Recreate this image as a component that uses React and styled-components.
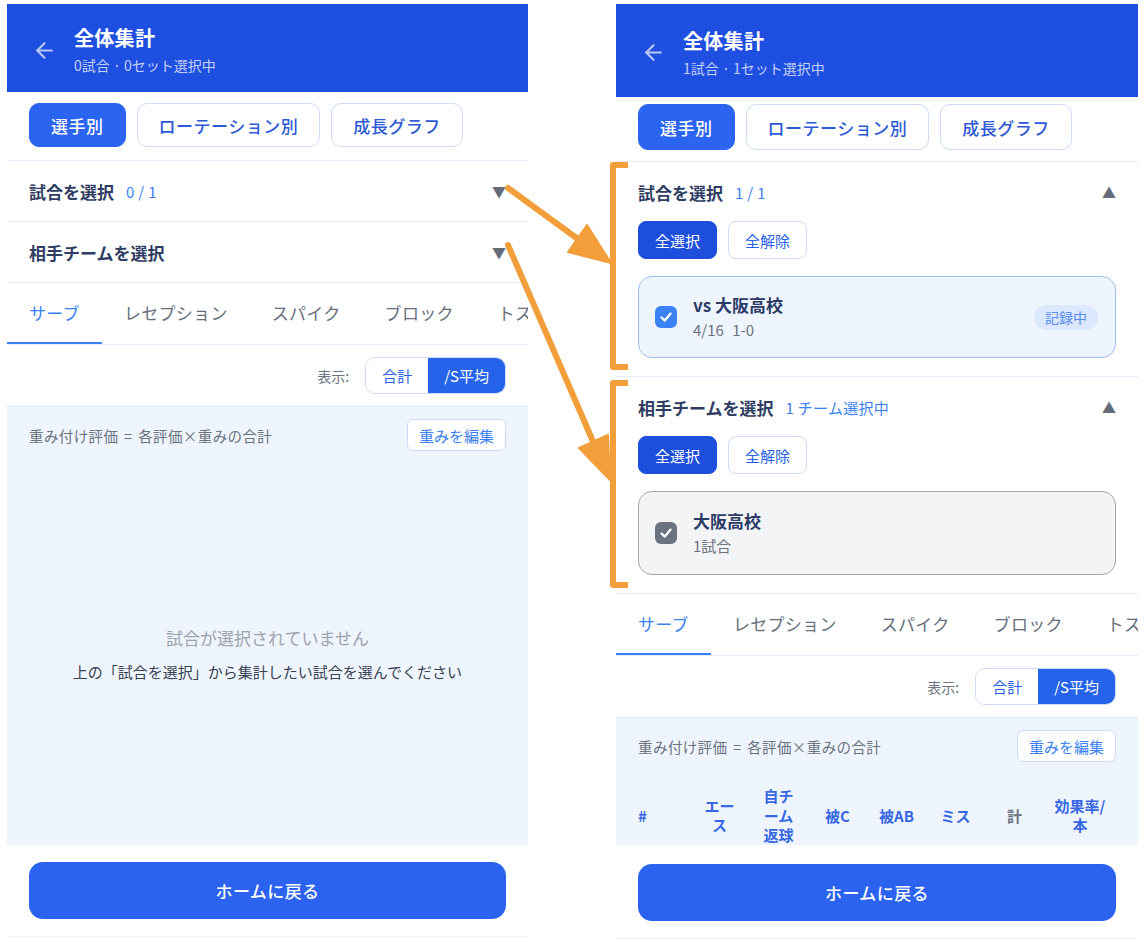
import React from 'react';
import styled, { createGlobalStyle } from 'styled-components';
import { ArrowLeft } from 'lucide-react';

const GlobalStyle = createGlobalStyle`
  html, body {
    margin: 0;
    padding: 0;
    background: #ffffff;
  }
  body {
    font-family: "Noto Sans CJK JP", "Noto Sans", "Liberation Sans", sans-serif;
    color: #2f3d63;
    overflow: hidden;
  }
  * { box-sizing: border-box; }
`;

const Page = styled.div`
  position: relative;
  width: 1148px;
  height: 942px;
  display: flex;
  align-items: flex-start;
  gap: 88px;
  padding: 4px 0 0 7px;
  overflow: hidden;
`;

const Screen = styled.div`
  width: ${(p) => p.$width}px;
  height: ${(p) => (p.$tall ? 935 : 933)}px;
  display: flex;
  flex-direction: column;
  background: #ffffff;
  border-bottom: 1px solid #eef2f9;
`;

const Header = styled.header`
  flex: none;
  height: ${(p) => (p.$tall ? 93 : 88)}px;
  background: #1f4fe0;
  display: flex;
  align-items: center;
  gap: 17px;
  padding: 4px 25px 0;
  color: #ffffff;
`;

const BackIcon = styled(ArrowLeft)`
  color: #b9c9f8;
  flex: none;
`;

const TitleBlock = styled.div`
  display: flex;
  flex-direction: column;
`;

const Title = styled.h1`
  margin: 0;
  font-size: 20px;
  line-height: 26px;
  font-weight: 700;
  letter-spacing: 0.3px;
`;

const Subtitle = styled.div`
  margin-top: 5px;
  font-size: 14px;
  line-height: 19px;
  color: #c3d1fa;
`;

const Body = styled.div`
  flex: 1;
  min-height: 0;
  overflow: hidden;
  display: flex;
  flex-direction: column;
`;

const ModeBar = styled.div`
  flex: none;
  display: flex;
  gap: 11px;
  padding: ${(p) => (p.$tall ? '7px 22px 11px' : '11px 22px 13px')};
  border-bottom: 1px solid #e4ecfa;
`;

const ModeButton = styled.button`
  height: ${(p) => (p.$tall ? 46 : 44)}px;
  padding: 0 21px;
  border-radius: 10px;
  font-family: inherit;
  font-size: 17px;
  font-weight: 500;
  letter-spacing: 0.5px;
  border: 1px solid ${(p) => (p.$active ? '#2b64f1' : '#cddbf6')};
  background: ${(p) => (p.$active ? '#2b64f1' : '#ffffff')};
  color: ${(p) => (p.$active ? '#ffffff' : '#2c5ad6')};
`;

const Section = styled.section`
  flex: none;
  padding: 18px 22px;
  border-bottom: 1px solid #e4ecfa;
`;

const SectionHead = styled.div`
  display: flex;
  align-items: center;
  height: 24px;
`;

const SectionTitle = styled.span`
  font-size: 17px;
  font-weight: 600;
  color: #2f3d63;
`;

const SectionCount = styled.span`
  margin-left: 12px;
  font-size: 15px;
  letter-spacing: 0.3px;
  color: #3b7ff2;
`;

const Caret = styled.span`
  margin-left: auto;
  margin-right: 0;
  font-size: 14px;
  color: #646b78;
`;

const ButtonRow = styled.div`
  display: flex;
  gap: 11px;
  margin-top: 17px;
`;

const SmallButton = styled.button`
  height: 38px;
  padding: 0 16px;
  border-radius: 8px;
  font-family: inherit;
  font-size: 15px;
  border: 1px solid ${(p) => (p.$filled ? '#1d4fdc' : '#cddbf6')};
  background: ${(p) => (p.$filled ? '#1d4fdc' : '#ffffff')};
  color: ${(p) => (p.$filled ? '#ffffff' : '#2a62e6')};
`;

const Card = styled.div`
  margin-top: 17px;
  height: ${(p) => (p.$muted ? 84 : 82)}px;
  display: flex;
  align-items: center;
  gap: 16px;
  padding: 0 16px;
  border-radius: 14px;
  border: 1.5px solid ${(p) => (p.$muted ? '#a3a8b2' : '#9fbdf5')};
  background: ${(p) => (p.$muted ? '#f3f4f6' : '#eff5fe')};
`;

const CheckBox = styled.span`
  flex: none;
  width: 22px;
  height: 22px;
  border-radius: 6px;
  background: ${(p) => (p.$muted ? '#6b7280' : '#3b82f6')};
  display: flex;
  align-items: center;
  justify-content: center;
`;

const CardText = styled.div`
  display: flex;
  flex-direction: column;
  gap: 3px;
`;

const CardName = styled.div`
  font-size: 17px;
  font-weight: 600;
  line-height: 22px;
  color: #2b3a66;
`;

const CardSub = styled.div`
  font-size: 15px;
  line-height: 21px;
  color: #6b7280;
  word-spacing: 5px;
`;

const Badge = styled.span`
  margin-left: auto;
  margin-right: 1px;
  height: 25px;
  padding: 0 11px;
  border-radius: 13px;
  background: #dce8fd;
  color: #5a8df0;
  font-size: 14px;
  display: flex;
  align-items: center;
`;

const StatTabs = styled.div`
  flex: none;
  display: flex;
  height: 62px;
  border-bottom: 1px solid #e4ecfa;
  overflow: hidden;
  white-space: nowrap;
`;

const StatTab = styled.div`
  flex: none;
  padding: 0 22px;
  display: flex;
  align-items: center;
  font-size: 17px;
  letter-spacing: 0.3px;
  color: ${(p) => (p.$active ? '#3b82f6' : '#676f7c')};
  border-bottom: 3px solid ${(p) => (p.$active ? '#3b82f6' : 'transparent')};
  margin-bottom: -1px;
  padding-top: 0;
`;

const ViewRow = styled.div`
  flex: none;
  height: 61px;
  display: flex;
  align-items: center;
  justify-content: flex-end;
  gap: 16px;
  padding: 0 22px;
`;

const ViewLabel = styled.span`
  font-size: 14px;
  color: #6b7280;
`;

const Toggle = styled.div`
  display: flex;
  height: 37px;
  border: 1px solid #cddbf6;
  border-radius: 10px;
  overflow: hidden;
`;

const ToggleItem = styled.span`
  display: flex;
  align-items: center;
  padding: 0 16px;
  font-size: 15px;
  background: ${(p) => (p.$active ? '#2563eb' : '#ffffff')};
  color: ${(p) => (p.$active ? '#ffffff' : '#2a62e6')};
`;

const Panel = styled.div`
  flex: ${(p) => (p.$fill ? 1 : 'none')};
  display: flex;
  flex-direction: column;
  background: #eff5fe;
  border-top: 1px solid #dfe8f8;
`;

const PanelHead = styled.div`
  display: flex;
  align-items: center;
  justify-content: space-between;
  padding: 12px 22px 13px;
`;

const Formula = styled.span`
  font-size: 14.5px;
  letter-spacing: 0.4px;
  word-spacing: 2px;
  color: #6b7280;
`;

const EditButton = styled.button`
  height: 32px;
  padding: 0 11px;
  border-radius: 6px;
  border: 1px solid #cddbf6;
  background: #ffffff;
  color: #3b7ff2;
  font-family: inherit;
  font-size: 15px;
`;

const Empty = styled.div`
  flex: 1;
  display: flex;
  flex-direction: column;
  align-items: center;
  justify-content: center;
  gap: 12px;
  padding-bottom: 2px;
`;

const EmptyTitle = styled.div`
  font-size: 17px;
  line-height: 23px;
  color: #9ca3af;
`;

const EmptyHint = styled.div`
  font-size: 15px;
  line-height: 21px;
  color: #374151;
`;

const TableHead = styled.div`
  display: grid;
  grid-template-columns: 52px repeat(6, 59px) 1fr;
  align-items: center;
  padding: 11px 22px 0;
`;

const HeadCell = styled.div`
  padding: 0 ${(p) => (p.$wide ? 8 : 10)}px;
  font-size: 15px;
  line-height: 19.5px;
  font-weight: 600;
  text-align: ${(p) => (p.$left ? 'left' : 'center')};
  color: ${(p) => (p.$gray ? '#6b7280' : '#3767e3')};
  ${(p) => (p.$left ? 'padding-left: 0;' : '')}
`;

const Footer = styled.footer`
  flex: none;
  padding: 17px 22px;
`;

const HomeButton = styled.button`
  width: 100%;
  height: 57px;
  border: none;
  border-radius: 14px;
  background: #2b63f0;
  color: #ffffff;
  font-family: inherit;
  font-size: 17px;
  font-weight: 500;
  letter-spacing: 0.4px;
`;

const Overlay = styled.svg`
  position: absolute;
  left: 0;
  top: 0;
  pointer-events: none;
`;

const Check = () => (
  <svg width="16" height="16" viewBox="0 0 16 16">
    <polyline points="3.5,8.5 6.8,11.6 12.6,4.6" fill="none" stroke="#ffffff" strokeWidth="2.3" strokeLinecap="round" strokeLinejoin="round" />
  </svg>
);

const statTabs = ['サーブ', 'レセプション', 'スパイク', 'ブロック', 'トス'];

const headCols = [
  { label: '#', left: true },
  { label: 'エース' },
  { label: '自チーム返球' },
  { label: '被C' },
  { label: '被AB' },
  { label: 'ミス' },
  { label: '計', gray: true },
  { label: '効果率/本', wide: true },
];

function PhoneScreen({ width, tall, subtitle, expanded }) {
  return (
    <Screen $width={width} $tall={tall}>
      <Header $tall={tall}>
        <BackIcon size={25} strokeWidth={2} />
        <TitleBlock>
          <Title>全体集計</Title>
          <Subtitle>{subtitle}</Subtitle>
        </TitleBlock>
      </Header>

      <Body>
        <ModeBar $tall={tall}>
          <ModeButton $tall={tall} $active>選手別</ModeButton>
          <ModeButton $tall={tall}>ローテーション別</ModeButton>
          <ModeButton $tall={tall}>成長グラフ</ModeButton>
        </ModeBar>

        <Section>
          <SectionHead>
            <SectionTitle>試合を選択</SectionTitle>
            <SectionCount>{expanded ? '1 / 1' : '0 / 1'}</SectionCount>
            <Caret>{expanded ? '▲' : '▼'}</Caret>
          </SectionHead>
          {expanded && (
            <>
              <ButtonRow>
                <SmallButton $filled>全選択</SmallButton>
                <SmallButton>全解除</SmallButton>
              </ButtonRow>
              <Card>
                <CheckBox><Check /></CheckBox>
                <CardText>
                  <CardName>vs 大阪高校</CardName>
                  <CardSub>4/16 1-0</CardSub>
                </CardText>
                <Badge>記録中</Badge>
              </Card>
            </>
          )}
        </Section>

        <Section>
          <SectionHead>
            <SectionTitle>相手チームを選択</SectionTitle>
            {expanded && <SectionCount>1 チーム選択中</SectionCount>}
            <Caret>{expanded ? '▲' : '▼'}</Caret>
          </SectionHead>
          {expanded && (
            <>
              <ButtonRow>
                <SmallButton $filled>全選択</SmallButton>
                <SmallButton>全解除</SmallButton>
              </ButtonRow>
              <Card $muted>
                <CheckBox $muted><Check /></CheckBox>
                <CardText>
                  <CardName>大阪高校</CardName>
                  <CardSub>1試合</CardSub>
                </CardText>
              </Card>
            </>
          )}
        </Section>

        <StatTabs>
          {statTabs.map((t, i) => (
            <StatTab key={t} $active={i === 0}>{t}</StatTab>
          ))}
        </StatTabs>

        <ViewRow>
          <ViewLabel>表示:</ViewLabel>
          <Toggle>
            <ToggleItem>合計</ToggleItem>
            <ToggleItem $active>/S平均</ToggleItem>
          </Toggle>
        </ViewRow>

        <Panel $fill={!expanded}>
          <PanelHead>
            <Formula>重み付け評価 = 各評価×重みの合計</Formula>
            <EditButton>重みを編集</EditButton>
          </PanelHead>
          {expanded ? (
            <TableHead>
              {headCols.map((c) => (
                <HeadCell key={c.label} $left={c.left} $gray={c.gray} $wide={c.wide}>
                  {c.label}
                </HeadCell>
              ))}
            </TableHead>
          ) : (
            <Empty>
              <EmptyTitle>試合が選択されていません</EmptyTitle>
              <EmptyHint>上の「試合を選択」から集計したい試合を選んでください</EmptyHint>
            </Empty>
          )}
        </Panel>
      </Body>

      <Footer>
        <HomeButton>ホームに戻る</HomeButton>
      </Footer>
    </Screen>
  );
}

const ORANGE = '#f29e3a';

function Callouts() {
  return (
    <Overlay width="1148" height="942" viewBox="0 0 1148 942">
      <g fill="none" stroke={ORANGE} strokeWidth="6" strokeLinejoin="round">
        <line x1="508" y1="188" x2="582" y2="242" strokeLinecap="round" />
        <line x1="508" y1="245" x2="595" y2="446" strokeLinecap="round" />
        <path d="M 628 165 H 613 V 367 H 628" />
        <path d="M 628 383 H 613 V 585 H 628" />
      </g>
      <g fill={ORANGE} stroke={ORANGE} strokeWidth="2" strokeLinejoin="round">
        <polygon points="611,263 568,252 587,225" />
        <polygon points="610,480 579,448 608,435" />
      </g>
    </Overlay>
  );
}

export default function App() {
  return (
    <>
      <GlobalStyle />
      <Page>
        <PhoneScreen width={521} subtitle="0試合 · 0セット選択中" />
        <PhoneScreen width={522} tall expanded subtitle="1試合 · 1セット選択中" />
        <Callouts />
      </Page>
    </>
  );
}
